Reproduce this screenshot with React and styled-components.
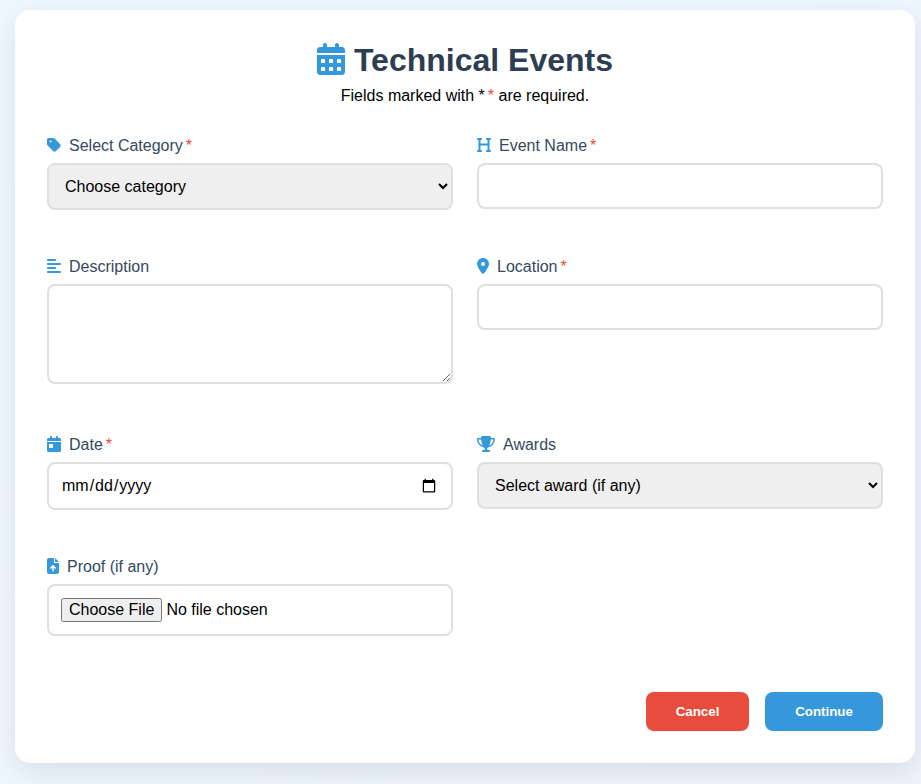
import React from "react";
import styled, { createGlobalStyle, css } from "styled-components";
import {
  FaAlignLeft,
  FaCalendarDay,
  FaCalendarDays,
  FaFileArrowUp,
  FaHeading,
  FaLocationDot,
  FaTag,
  FaTrophy,
} from "react-icons/fa6";

const GlobalStyle = createGlobalStyle`
  * { box-sizing: border-box; }
  body {
    margin: 0;
    min-height: 784px;
    background: linear-gradient(135deg, #f0f8ff, #edf4fe);
    font-family: "Liberation Sans", Arial, sans-serif;
    font-size: 16px;
    color: #000;
    overflow: hidden;
  }
`;

const Card = styled.main`
  width: 900px;
  height: 753px;
  margin: 10px 0 0 15px;
  padding: 32px;
  background: #fff;
  border-radius: 15px;
  box-shadow: 0 8px 30px rgba(0, 0, 0, 0.1);
`;

const Title = styled.h1`
  margin: 0;
  height: 37px;
  line-height: 37px;
  font-size: 32px;
  color: #2c3e50;
  text-align: center;
  svg {
    width: 28px;
    height: 32px;
    color: #3498db;
    vertical-align: -4px;
  }
`;

const Note = styled.p`
  margin: 8px 0 0;
  line-height: 18px;
  text-align: center;
`;

const Star = styled.span`
  color: #e74c3c;
  margin-left: 3px;
`;

const Grid = styled.form`
  display: grid;
  grid-template-columns: 406px 406px;
  grid-template-rows: 121px 178px 122px 86px;
  column-gap: 24px;
  margin-top: 31px;
`;

const Field = styled.div`
  display: flex;
  flex-direction: column;
`;

const Label = styled.label`
  height: 18px;
  line-height: 20px;
  margin-bottom: 9px;
  color: #34495e;
  svg {
    width: ${(p) => p.$iconWidth}px;
    height: 16px;
    margin-right: 8px;
    color: #3498db;
    vertical-align: -2px;
  }
`;

const control = css`
  width: 100%;
  height: ${(p) => p.$height}px;
  border: 2px solid #dfdfdf;
  border-radius: 8px;
  padding: 12px;
  font: 16px "Liberation Sans", Arial, sans-serif;
`;

const Input = styled.input`${control}`;

const Select = styled.select`${control}`;

const TextArea = styled.textarea`
  ${control}
  resize: vertical;
`;

const Actions = styled.footer`
  display: flex;
  justify-content: flex-end;
  gap: 16px;
  margin-top: 49px;
`;

const Button = styled.button`
  width: ${(p) => p.$width}px;
  height: 39px;
  border: 0;
  border-radius: 8px;
  background: ${(p) => p.$color};
  color: #fff;
  font: bold 13.333px "Liberation Sans", Arial, sans-serif;
`;

function FormField({ icon: Icon, iconWidth = 14, text, required, children }) {
  return (
    <Field>
      <Label $iconWidth={iconWidth}>
        <Icon />
        {text}
        {required && <Star>*</Star>}
      </Label>
      {children}
    </Field>
  );
}

export default function App() {
  return (
    <>
      <GlobalStyle />
      <Card>
        <Title><FaCalendarDays /> Technical Events</Title>
        <Note>Fields marked with *<Star>*</Star> are required.</Note>
        <Grid>
          <FormField icon={FaTag} text="Select Category" required>
            <Select $height={47}><option>Choose category</option></Select>
          </FormField>
          <FormField icon={FaHeading} text="Event Name" required>
            <Input $height={46} />
          </FormField>
          <FormField icon={FaAlignLeft} text="Description">
            <TextArea $height={100} />
          </FormField>
          <FormField icon={FaLocationDot} iconWidth={12} text="Location" required>
            <Input $height={46} />
          </FormField>
          <FormField icon={FaCalendarDay} text="Date" required>
            <Input type="date" $height={48} />
          </FormField>
          <FormField icon={FaTrophy} iconWidth={18} text="Awards">
            <Select $height={47}><option>Select award (if any)</option></Select>
          </FormField>
          <FormField icon={FaFileArrowUp} iconWidth={12} text="Proof (if any)">
            <Input type="file" $height={52} />
          </FormField>
        </Grid>
        <Actions>
          <Button type="button" $width={103} $color="#e74c3c">Cancel</Button>
          <Button type="button" $width={118} $color="#3498db">Continue</Button>
        </Actions>
      </Card>
    </>
  );
}
